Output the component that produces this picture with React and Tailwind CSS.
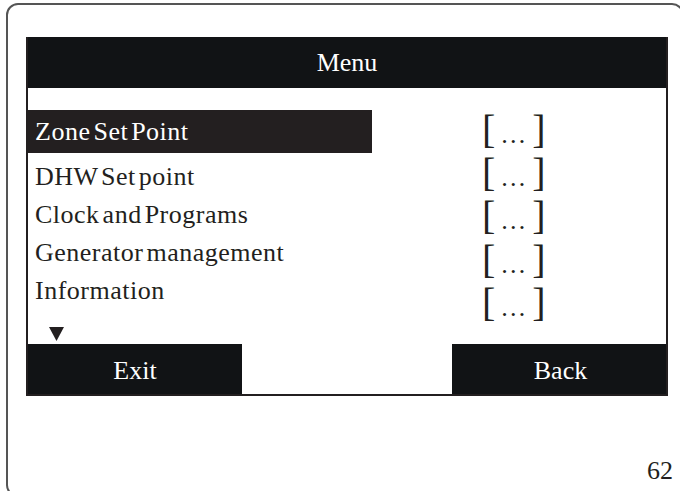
import React from "react";

function Bracket() {
  return (
    <div className="flex h-[43.4px] items-center">
      <div className="flex items-baseline text-[#231f20]">
        <span className="text-[40px] leading-none">[</span>
        <span className="ml-[5px] mr-[6px] text-[26px] leading-none">…</span>
        <span className="text-[40px] leading-none">]</span>
      </div>
    </div>
  );
}

export default function App() {
  const rows = ["DHW Set point", "Clock and Programs", "Generator management", "Information"];
  return (
    <div className="h-[491px] w-[680px] overflow-hidden bg-white font-['Liberation_Serif',_'Times_New_Roman',_serif]">
      <div className="ml-[6px] mt-[3px] flex h-[494px] w-[678px] flex-col rounded-[12px] border-2 border-[#555555]">
        <div className="ml-[18px] mt-[32px] flex w-[642px] flex-col border-x-2 border-b-2 border-[#231f20]">
          <div className="flex h-[51px] items-center justify-center bg-[#111315] text-[26px] text-white">
            Menu
          </div>
          <div className="flex h-[256px]">
            <div className="flex w-[344px] flex-col pt-[22px] text-[26px] tracking-[0.5px] text-[#231f20] [word-spacing:-4px]">
              <div className="flex h-[43px] items-center bg-[#231f20] pl-[7px] leading-[43px] text-white">
                Zone Set Point
              </div>
              <div className="mt-[5px] flex flex-col">
                {rows.map((r) => (
                  <div key={r} className="h-[38px] pl-[7px] leading-[38px]">
                    {r}
                  </div>
                ))}
              </div>
              <svg className="ml-[21px] mt-[17px]" width="15" height="14" viewBox="0 0 15 14">
                <polygon points="0,0 15,0 7.5,14" fill="#231f20" />
              </svg>
            </div>
            <div className="ml-[110px] mt-[20px] flex flex-col">
              {[0, 1, 2, 3, 4].map((i) => (
                <Bracket key={i} />
              ))}
            </div>
          </div>
          <div className="flex h-[50px] justify-between">
            <div className="flex w-[214px] items-center justify-center bg-[#111315] pt-[3px] text-[26px] text-white">
              Exit
            </div>
            <div className="flex w-[214px] items-center justify-center bg-[#111315] pl-[3px] pt-[3px] text-[26px] text-white">
              Back
            </div>
          </div>
        </div>
        <div className="mt-[62px] flex justify-end pr-[9px] text-[26px] leading-none text-[#231f20]">62</div>
      </div>
    </div>
  );
}
